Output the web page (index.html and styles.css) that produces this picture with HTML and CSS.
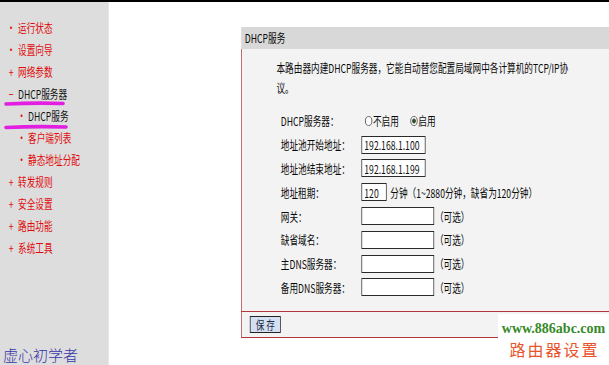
FILE: index.html
```html
<!DOCTYPE html>
<html lang="zh-cn">
  <head>
    <meta charset="utf-8">
    <meta name="viewport" content="width=device-width">
    <title>DHCP服务</title>
    <link rel="stylesheet" href="styles.css">
  </head>

<body>
  <div class="frame">
    <div class="screen">
      <!-- left menu -->
      <div class="menu">
        <ul class="nav">
          <li class="top"><span class="mark">•</span>运行状态</li>
          <li class="top"><span class="mark">•</span>设置向导</li>
          <li class="top"><span class="mark">+</span>网络参数</li>
          <li class="top open"><span class="mark">−</span>DHCP服务器</li>
          <li class="sub active"><span class="mark">•</span>DHCP服务</li>
          <li class="sub"><span class="mark">•</span>客户端列表</li>
          <li class="sub"><span class="mark">•</span>静态地址分配</li>
          <li class="top"><span class="mark">+</span>转发规则</li>
          <li class="top"><span class="mark">+</span>安全设置</li>
          <li class="top"><span class="mark">+</span>路由功能</li>
          <li class="top"><span class="mark">+</span>系统工具</li>
        </ul>
      </div>

      <!-- main frame -->
      <div class="main">
        <form class="panel">
          <div class="panel-head">DHCP服务</div>
          <div class="panel-body">
            <p class="intro">本路由器内建DHCP服务器，它能自动替您配置局域网中各计算机的TCP/IP协议。</p>
            <div class="form">
              <label>DHCP服务器：</label>
              <div class="field">
                <input class="radio" type="radio" name="dhcp" id="off"><label for="off">不启用</label>
                <input class="radio second" type="radio" name="dhcp" id="on" checked><label for="on">启用</label>
              </div>

              <label for="start">地址池开始地址：</label>
              <div class="field"><input class="text w-ip" id="start" value="192.168.1.100"></div>

              <label for="end">地址池结束地址：</label>
              <div class="field"><input class="text w-ip" id="end" value="192.168.1.199"></div>

              <label for="lease">地址租期：</label>
              <div class="field"><input class="text w-short" id="lease" value="120"><span class="unit">分钟（1~2880分钟，缺省为120分钟）</span></div>

              <label for="gw">网关：</label>
              <div class="field"><input class="text w-opt" id="gw"><span class="opt">（可选）</span></div>

              <label for="domain">缺省域名：</label>
              <div class="field"><input class="text w-opt" id="domain"><span class="opt">（可选）</span></div>

              <label for="dns1">主DNS服务器：</label>
              <div class="field"><input class="text w-opt" id="dns1"><span class="opt">（可选）</span></div>

              <label for="dns2">备用DNS服务器：</label>
              <div class="field"><input class="text w-opt" id="dns2"><span class="opt">（可选）</span></div>
            </div>
          </div>
          <div class="panel-foot">
            <button type="button" class="save">保 存</button>
          </div>
        </form>
      </div>
    </div>
  </div>

    <!-- hand drawn marks and watermarks on top of the screenshot -->
    <svg class="marker" width="80" height="140" viewBox="0 0 80 140">
      <path d="M6 104 Q35 102.5 63 103.5" />
      <path d="M6 127.5 Q36 126 66 127" />
    </svg>
    <div class="sign">虚心初学者</div>
    <div class="stamp">
      <div class="url">www.886abc.com</div>
      <div class="cn">路由器设置</div>
    </div>
</body>

</html>
```

FILE: styles.css
```css
html, body {
  margin: 0;
  height: 100%;
}

body {
  position: relative;
  overflow: hidden;
  background: #fff;
  font: 12px "Noto Sans CJK SC", sans-serif;
  color: #0a0a0a;
  text-spacing-trim: space-all;
}

.frame {
  width: 609px;
  height: 365px;
  overflow: hidden;
}

/* the whole shot is squeezed horizontally */
.screen {
  display: flex;
  width: 845.8px;
  height: 365px;
  box-sizing: border-box;
  border-top: 2px solid #000;
  transform: scaleX(0.72);
  transform-origin: 0 0;
}

/* Menu */
.menu {
  width: 151px;
  flex: none;
  background: #dddddd;
}

.nav {
  list-style: none;
  margin: 0;
  padding: 15px 0 0;
}

.nav li {
  height: 22px;
  line-height: 22px;
  white-space: nowrap;
  color: #e00a0a;
}

.nav .mark {
  display: inline-block;
  text-align: center;
  color: #e00a0a;
}

.nav .top {
  padding-left: 6px;
}

.nav .top .mark {
  width: 19px;
}

.nav .sub {
  padding-left: 21px;
}

.nav .sub .mark {
  width: 18px;
}

.nav .open,
.nav .active {
  color: #111;
}

/* Main frame */
.main {
  flex: 1;
  min-width: 0;
  padding: 25px 0 0 184px;
}

.panel {
  margin: 0;
}

.panel-head {
  height: 22px;
  line-height: 22px;
  padding-left: 5px;
  background: #d8d8d8;
}

.panel-body {
  height: 262px;
  box-sizing: border-box;
  padding: 9px 0 0 48px;
  border-left: 1px solid #b5363a;
  background: #f3f3f3;
}

.intro {
  margin: 0;
  width: 412px;
  line-height: 20px;
}

.form {
  display: grid;
  grid-template-columns: 112px auto;
  grid-auto-rows: 23.8px;
  align-items: center;
  margin: 11px 0 0 6px;
}

.field {
  display: flex;
  align-items: center;
  white-space: nowrap;
}

.text {
  height: 18px;
  box-sizing: border-box;
  margin: 0;
  padding: 0 3px;
  border: 1px solid #2a2a2a;
  background: #fff;
  font: 12px "Noto Sans CJK SC", sans-serif;
  color: #111;
}

.w-ip {
  width: 89px;
}

.w-short {
  width: 35px;
}

.w-opt {
  width: 101px;
}

.unit {
  margin-left: 5px;
}

.opt {
  margin-left: 1px;
}

.radio {
  appearance: none;
  width: 10px;
  height: 10px;
  margin: 0 1px 0 5px;
  border: 1px solid #555;
  border-radius: 50%;
  background: #fff;
}

.radio.second {
  margin-left: 16px;
}

.radio:checked {
  background: radial-gradient(circle, #2f4f2f 0 2px, #fff 3px);
}

.panel-foot {
  height: 21px;
  padding: 4px 0 0 11px;
  border: 1px solid #b5363a;
  border-right: none;
  background: #f3f3f3;
}

.save {
  width: 43px;
  height: 17px;
  padding: 0;
  border: 1px solid #222;
  background: #d4e0f2;
  font: 12px/15px "Noto Sans CJK SC", sans-serif;
  color: #1a2a44;
}

/* Overlays */
.marker {
  position: absolute;
  left: 0;
  top: 0;
}

.marker path {
  fill: none;
  stroke: #e21ee2;
  stroke-width: 3.6;
  stroke-linecap: round;
}

.sign {
  position: absolute;
  left: 3px;
  top: 346px;
  line-height: 18px;
  font-size: 15px;
  font-weight: 300;
  color: #3434a8;
}

.stamp {
  position: absolute;
  left: 498px;
  top: 314px;
  width: 111px;
  height: 51px;
  background: #fff;
  text-align: center;
}

.url {
  margin-top: 7px;
  font: bold 14px/16px "Liberation Serif", serif;
  color: #378a2a;
}

.cn {
  margin-top: 3px;
  padding-left: 2px;
  line-height: 18px;
  font-size: 16px;
  letter-spacing: 2px;
  color: #e8542a;
}
```
